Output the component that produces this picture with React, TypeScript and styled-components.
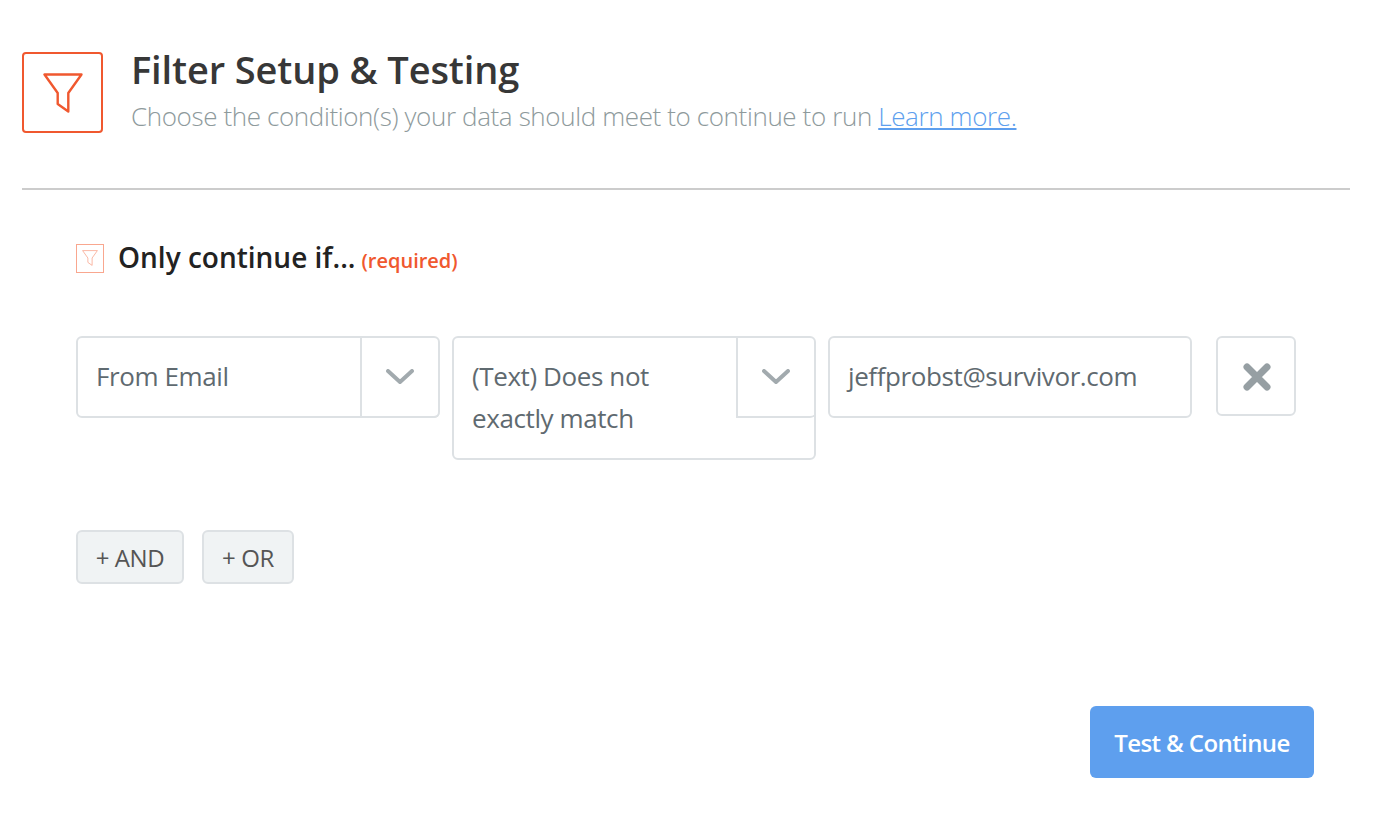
import React from "react";
import styled, { createGlobalStyle } from "styled-components";

const Global = createGlobalStyle`
  html, body { margin: 0; padding: 0; background: #fff; }
  body { font-family: "Open Sans", "Liberation Sans", sans-serif; }
`;

const Page = styled.div`
  width: 1374px;
  height: 832px;
  box-sizing: border-box;
  padding: 52px 24px 0 22px;
  overflow: hidden;
`;

const Header = styled.header`
  display: flex;
  gap: 28px;
  height: 138px;
  box-sizing: border-box;
  border-bottom: 2px solid #cccccc;
`;

const IconBox = styled.div`
  width: 81px;
  height: 81px;
  box-sizing: border-box;
  border: 2px solid #f0582f;
  border-radius: 4px;
  display: flex;
  align-items: center;
  justify-content: center;
`;

const HeadText = styled.div`
  display: flex;
  flex-direction: column;
`;

const Title = styled.h1`
  margin: -5px 0 0;
  font-size: 38px;
  line-height: 44px;
  font-weight: 600;
  letter-spacing: -0.12px;
  color: #373737;
`;

const Subtitle = styled.p`
  margin: 5px 0 0;
  font-size: 26px;
  line-height: 40px;
  font-weight: 300;
  color: #8e9a9c;
  letter-spacing: -0.38px;
`;

const Learn = styled.a`
  color: #5e9fee;
  text-decoration: underline;
  font-weight: 300;
`;

const Body = styled.section`
  padding: 54px 54px 0;
  display: flex;
  flex-direction: column;
`;

const Required = styled.div`
  display: flex;
  align-items: center;
  height: 30px;
  gap: 14px;
`;

const SmallIcon = styled.div`
  width: 28px;
  height: 29px;
  margin-top: -2px;
  box-sizing: border-box;
  border: 1px solid #f9a78f;
  display: flex;
  align-items: center;
  justify-content: center;
`;

const Label = styled.h2`
  margin: 0;
  font-size: 28px;
  line-height: 30px;
  font-weight: 600;
  color: #222222;
  display: flex;
  align-items: baseline;
  gap: 6px;
`;

const RequiredTag = styled.span`
  font-size: 20px;
  font-weight: 600;
  color: #f0582f;
`;

const Filters = styled.div`
  display: flex;
  align-items: flex-start;
  margin-top: 62px;
`;

const SelectBox = styled.div`
  position: relative;
  width: 364px;
  box-sizing: border-box;
  border: 2px solid #dde1e4;
  border-radius: 6px;
  margin-right: 12px;
  padding: 17px 96px 19px 18px;
  font-size: 26px;
  line-height: 42px;
  letter-spacing: -0.4px;
  color: #5f6a70;
`;

const Arrow = styled.div`
  position: absolute;
  top: -2px;
  right: -2px;
  width: 80px;
  height: 82px;
  box-sizing: border-box;
  padding: 2px 2px 0 0;
  border-left: 2px solid #dde1e4;
  border-bottom: 2px solid #dde1e4;
  border-bottom-right-radius: 6px;
  display: flex;
  align-items: center;
  justify-content: center;
`;

const ValueInput = styled(SelectBox)`
  padding-right: 18px;
  margin-right: 24px;
`;

const RemoveButton = styled.button`
  width: 80px;
  height: 80px;
  padding: 1px 0 0 1px;
  background: #fff;
  border: 2px solid #dde1e4;
  border-radius: 6px;
  display: flex;
  align-items: center;
  justify-content: center;
`;

const AddRow = styled.div`
  display: flex;
  gap: 18px;
  margin-top: 70px;
`;

const AddButton = styled.button<{ $width: number }>`
  width: ${(p) => p.$width}px;
  height: 54px;
  box-sizing: border-box;
  padding: 0;
  background: #f0f3f4;
  border: 2px solid #dde1e4;
  border-radius: 6px;
  font-family: inherit;
  font-size: 24px;
  letter-spacing: -0.4px;
  color: #555555;
`;

const Footer = styled.div`
  display: flex;
  justify-content: flex-end;
  margin-top: 122px;
  margin-right: -18px;
`;

const Primary = styled.button`
  width: 224px;
  height: 72px;
  padding: 0;
  border: 0;
  border-radius: 6px;
  background: #5e9fee;
  color: #fff;
  font-family: inherit;
  font-size: 24px;
  font-weight: 600;
  letter-spacing: -0.6px;
`;

const Funnel = ({ size, stroke, width }: { size: number; stroke: string; width: number }) => (
  <svg width={size} height={size} viewBox="0 0 40 40" fill="none">
    <path
      d="M1.5 1.5H38.5L25.3 20V38.5L14.7 31V20Z"
      stroke={stroke}
      strokeWidth={width}
      strokeLinejoin="round"
    />
  </svg>
);

const Chevron = () => (
  <svg width="28" height="16" viewBox="0 0 28 16" fill="none">
    <path d="M2 2L14 13L26 2" stroke="#a2aaae" strokeWidth="4" strokeLinecap="round" strokeLinejoin="round" />
  </svg>
);

const Cross = () => (
  <svg width="28" height="28" viewBox="0 0 28 28" fill="none">
    <path d="M4 4L24 24M24 4L4 24" stroke="#969fa3" strokeWidth="7" strokeLinecap="round" />
  </svg>
);

export default function App() {
  return (
    <Page>
      <Global />
      <Header>
        <IconBox>
          <Funnel size={40} stroke="#f0582f" width={2.4} />
        </IconBox>
        <HeadText>
          <Title>Filter Setup &amp; Testing</Title>
          <Subtitle>
            Choose the condition(s) your data should meet to continue to run <Learn href="#">Learn more.</Learn>
          </Subtitle>
        </HeadText>
      </Header>
      <Body>
        <Required>
          <SmallIcon>
            <Funnel size={16} stroke="#f9a78f" width={2} />
          </SmallIcon>
          <Label>
            Only continue if... <RequiredTag>(required)</RequiredTag>
          </Label>
        </Required>
        <Filters>
          <SelectBox>
            From Email
            <Arrow><Chevron /></Arrow>
          </SelectBox>
          <SelectBox>
            (Text) Does not exactly match
            <Arrow><Chevron /></Arrow>
          </SelectBox>
          <ValueInput>jeffprobst@survivor.com</ValueInput>
          <RemoveButton aria-label="Remove"><Cross /></RemoveButton>
        </Filters>
        <AddRow>
          <AddButton $width={108}>+ AND</AddButton>
          <AddButton $width={92}>+ OR</AddButton>
        </AddRow>
        <Footer>
          <Primary>Test &amp; Continue</Primary>
        </Footer>
      </Body>
    </Page>
  );
}
